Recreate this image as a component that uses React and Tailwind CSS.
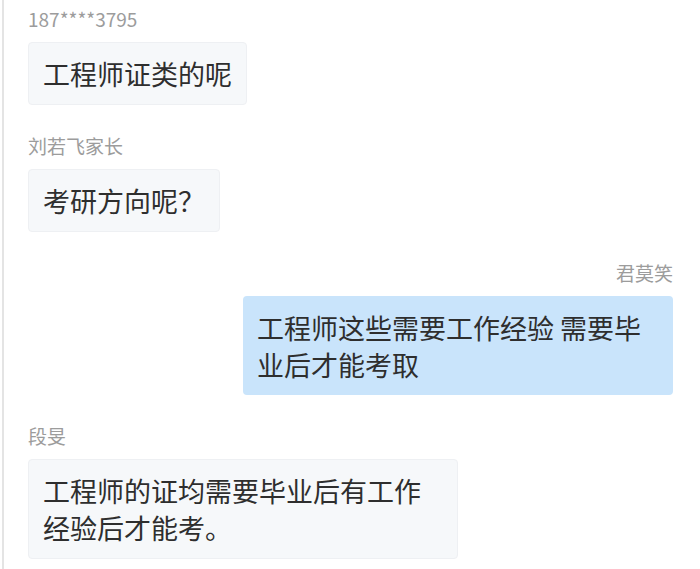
import React from "react";

const font = { fontFamily: '"Noto Sans CJK SC", "Noto Sans", sans-serif' };

const messages = [
  { name: "187****3795", text: "工程师证类的呢" },
  { name: "刘若飞家长", text: "考研方向呢？" },
  { name: "君莫笑", text: "工程师这些需要工作经验 需要毕业后才能考取", mine: true },
  { name: "段旻", text: "工程师的证均需要毕业后有工作经验后才能考。" },
];

function Message({ name, text, mine }) {
  return (
    <div className={`flex flex-col ${mine ? "items-end" : "items-start"}`}>
      <div className="text-[19px] leading-[22px] text-[#9c9c9c]">{name}</div>
      <div
        className={`mt-[12px] max-w-[430px] rounded-[4px] px-[14px] text-[27px] leading-[37px] text-[#2e2e2e] ${
          mine ? "bg-[#c9e4fb] py-[12.5px]" : "border border-[#eef0f3] bg-[#f6f8fa] py-[12px]"
        }`}
      >
        {text}
      </div>
    </div>
  );
}

export default function App() {
  return (
    <div className="flex h-[569px] w-[700px] overflow-hidden bg-white" style={font}>
      <div className="ml-[2px] w-[2px] bg-[#e4e4e4]" />
      <div className="flex flex-1 flex-col gap-[30px] pl-[24px] pr-[27px] pt-[8px]">
        {messages.map((m) => (
          <Message key={m.name} {...m} />
        ))}
      </div>
    </div>
  );
}
